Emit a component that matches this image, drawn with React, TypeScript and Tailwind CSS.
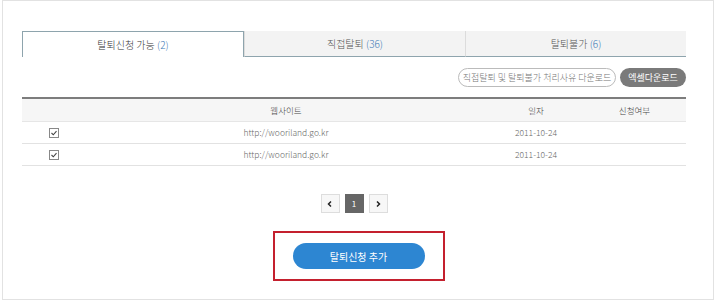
import React from "react";

const tabs = [
  { label: "탈퇴신청 가능", count: 2, active: true },
  { label: "직접탈퇴", count: 36, active: false },
  { label: "탈퇴불가", count: 6, active: false },
];

const rows = [
  { url: "http://wooriland.go.kr", date: "2011-10-24" },
  { url: "http://wooriland.go.kr", date: "2011-10-24" },
];

const CheckBox = () => (
  <span className="flex h-[10px] w-[10px] items-center justify-center border border-[#888] bg-white">
    <svg width="8" height="8" viewBox="0 0 8 8" fill="none">
      <path d="M1.5 4 L3.3 5.8 L6.5 2.2" stroke="#444" strokeWidth="1.1" />
    </svg>
  </span>
);

export default function App() {
  return (
    <div
      className="h-[302px] w-[720px] bg-white pl-[2px]"
      style={{ fontFamily: "'Noto Sans CJK KR', 'Noto Sans', sans-serif" }}
    >
      <div className="flex h-[300px] w-[712px] flex-col border border-[#e2e2e2] pl-[19px] pr-[27px] pt-[30px]">
        {/* tabs */}
        <div className="flex h-[26px]">
          {tabs.map((t) => (
            <div
              key={t.label}
              className={`flex flex-1 items-center justify-center text-[10px] font-light ${
                t.active
                  ? "border-x border-t border-[#8ea4ad] bg-white text-[#333]"
                  : "border-b border-[#8ea4ad] border-l border-l-[#dcdcdc] bg-[#f3f3f3] text-[#555]"
              }`}
            >
              {t.label}&nbsp;<span className="text-[#3b78b5]">({t.count})</span>
            </div>
          ))}
        </div>

        {/* download buttons */}
        <div className="mt-[11px] flex justify-end gap-[4px]">
          <button className="h-[19px] w-[158px] rounded-full border border-[#bbb] bg-white text-[9px] font-light text-[#777]">
            직접탈퇴 및 탈퇴불가 처리사유 다운로드
          </button>
          <button className="h-[19px] w-[66px] rounded-full bg-[#7a7a7a] text-[9px] text-white">
            엑셀다운로드
          </button>
        </div>

        {/* table */}
        <div className="mt-[10px] border-t-2 border-[#7d7d7d] text-[8.5px] font-light">
          <div className="grid h-[23px] grid-cols-[62px_404px_96px_101px] items-center border-b border-[#e6e6e6] bg-[#f6f6f6] text-[#444]">
            <span />
            <span className="text-center">웹사이트</span>
            <span className="text-center">일자</span>
            <span className="text-center">신청여부</span>
          </div>
          {rows.map((r, i) => (
            <div
              key={i}
              className="grid h-[22px] grid-cols-[62px_404px_96px_101px] items-center border-b border-[#e2e2e2] text-[#666]"
            >
              <span className="flex justify-center pl-[2px]">
                <CheckBox />
              </span>
              <span className="text-center">{r.url}</span>
              <span className="text-center">{r.date}</span>
              <span />
            </div>
          ))}
        </div>

        {/* pagination */}
        <div className="mt-[28px] flex justify-center gap-[5px]">
          <button className="flex h-[19px] w-[19px] items-center justify-center border border-[#ddd] bg-[#f7f7f7]">
            <svg width="8" height="8" viewBox="0 0 8 8" fill="none">
              <path d="M5 1.5 L2.5 4 L5 6.5" stroke="#222" strokeWidth="1.5" />
            </svg>
          </button>
          <button className="flex h-[19px] w-[19px] items-center justify-center bg-[#666] text-[8px] text-white">
            1
          </button>
          <button className="flex h-[19px] w-[19px] items-center justify-center border border-[#ddd] bg-[#f7f7f7]">
            <svg width="8" height="8" viewBox="0 0 8 8" fill="none">
              <path d="M3 1.5 L5.5 4 L3 6.5" stroke="#222" strokeWidth="1.5" />
            </svg>
          </button>
        </div>

        {/* submit */}
        <div className="mt-[18px] flex justify-center pl-[9px]">
          <div className="flex h-[50px] w-[172px] items-center justify-center border-2 border-[#c4202e]">
            <button className="h-[26px] w-[132px] rounded-full bg-[#2d86d2] text-[10px] text-white">
              탈퇴신청 추가
            </button>
          </div>
        </div>
      </div>
    </div>
  );
}
